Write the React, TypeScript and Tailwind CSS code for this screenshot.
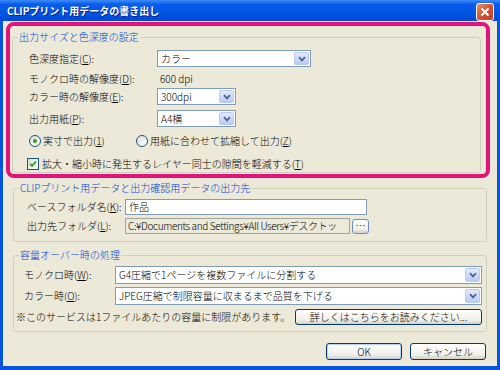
import React from "react";

const F = "font-['MS_UI_Gothic','Noto_Sans_CJK_JP',sans-serif]";

function Chevron() {
  return (
    <svg width="8" height="6" viewBox="0 0 8 6">
      <path d="M1 1.2 L4 4.4 L7 1.2" stroke="#4D6185" strokeWidth="1.7" fill="none" />
    </svg>
  );
}

function Select({ value, className }: { value: string; className: string }) {
  return (
    <div className={`flex items-stretch border border-[#7F9DB9] bg-white ${className}`}>
      <div className="flex flex-1 items-center pl-[3px] text-[10px] leading-none text-black">{value}</div>
      <div className="m-[1px] flex w-[15px] items-center justify-center rounded-[2px] border border-[#B9CBF3] bg-[linear-gradient(to_bottom,#E2EAFE,#B8CBF8)]">
        <Chevron />
      </div>
    </div>
  );
}

function Radio({ checked }: { checked?: boolean }) {
  return (
    <span className="flex h-[12px] w-[12px] items-center justify-center rounded-full border border-[#1C5180] bg-[linear-gradient(135deg,#DCDCD7,#FFFFFF)]">
      {checked && <span className="h-[4px] w-[4px] rounded-full bg-[#21A121]" />}
    </span>
  );
}

function Checkbox() {
  return (
    <span className="flex h-[12px] w-[12px] items-center justify-center border border-[#1C5180] bg-[linear-gradient(135deg,#DCDCD7,#FFFFFF)]">
      <svg width="8" height="8" viewBox="0 0 8 8">
        <path d="M1 3.8 L3 6 L7 1.5" stroke="#21A121" strokeWidth="1.8" fill="none" />
      </svg>
    </span>
  );
}

function XPButton({ children, className }: { children: React.ReactNode; className: string }) {
  return (
    <div
      className={`flex items-center justify-center rounded-[3px] border border-[#003C74] bg-[linear-gradient(to_bottom,#FFFFFF,#F0F0EA_70%,#D6D0C5)] text-[10px] leading-none text-black ${className}`}
    >
      {children}
    </div>
  );
}

function Legend({ children }: { children: React.ReactNode }) {
  return (
    <legend className="ml-[5px] px-[1px] text-[10px] leading-[12px] text-[#0046D5]">{children}</legend>
  );
}

export default function App() {
  return (
    <div className={`flex h-[370px] w-[500px] flex-col bg-[#0855DD] font-light ${F}`}>
      {/* title bar */}
      <div className="flex h-[21px] shrink-0 items-start justify-between bg-[linear-gradient(to_bottom,#3D8DF7,#0A5DEC_20%,#0055E5_60%,#0049D6)] pl-[7px] pr-[6px]">
        <div className="mt-[5px] text-[10px] font-bold leading-[12px] text-white [text-shadow:1px_1px_0_#0A1E8C]">
          CLIPプリント用データの書き出し
        </div>
        <div className="mt-[3px] flex h-[18px] w-[18px] items-center justify-center rounded-[3px] border border-white bg-[linear-gradient(135deg,#E88C6E,#D0502F_55%,#C0401F)]">
          <svg width="10" height="10" viewBox="0 0 10 10">
            <path d="M1.5 1.5 L8.5 8.5 M8.5 1.5 L1.5 8.5" stroke="white" strokeWidth="2" />
          </svg>
        </div>
      </div>

      {/* body */}
      <div className="mx-[3px] mb-[4px] flex flex-1 flex-col bg-[#ECE9D8] text-black">
        {/* pink highlight around group 1 */}
        <div className="ml-[3px] mt-[1px] h-[156px] w-[484px] rounded-[8px] border-[4px] border-[#E3137B] pt-[5px]">
          <fieldset className="ml-[2px] w-[469px] rounded-[3px] border border-[#D0D0BF] p-0">
            <Legend>出力サイズと色深度の設定</Legend>
            <div className="flex flex-col pb-[1px] pl-[16px] pt-[7px] text-[10px] leading-none">
              <div className="flex h-[17px] items-center">
                <span className="w-[128px]">
                  色深度指定(<u>C</u>):
                </span>
                <Select value="カラー" className="h-[17px] w-[154px]" />
              </div>
              <div className="mt-[4px] flex h-[16px] items-center">
                <span className="w-[128px]">
                  モノクロ時の解像度(<u>D</u>):
                </span>
                <span className="pl-[3px]">600 dpi</span>
              </div>
              <div className="mt-[1px] flex h-[17px] items-center">
                <span className="w-[128px]">
                  カラー時の解像度(<u>E</u>):
                </span>
                <Select value="300dpi" className="h-[17px] w-[79px]" />
              </div>
              <div className="mt-[5px] flex h-[17px] items-center">
                <span className="w-[128px]">
                  出力用紙(<u>P</u>):
                </span>
                <Select value="A4横" className="h-[17px] w-[79px]" />
              </div>
              <div className="mt-[7px] flex h-[14px] items-center">
                <div className="flex w-[107px] items-center gap-[2px]">
                  <Radio checked />
                  <span>
                    実寸で出力(<u>1</u>)
                  </span>
                </div>
                <div className="flex items-center gap-[2px]">
                  <Radio />
                  <span>
                    用紙に合わせて拡縮して出力(<u>Z</u>)
                  </span>
                </div>
              </div>
              <div className="-ml-[2px] mt-[9px] flex h-[14px] items-center gap-[3px]">
                <Checkbox />
                <span>
                  拡大・縮小時に発生するレイヤー同士の隙間を軽減する(<u>T</u>)
                </span>
              </div>
            </div>
          </fieldset>
        </div>

        {/* group 2 */}
        <fieldset className="ml-[10px] mt-[4px] w-[474px] rounded-[3px] border border-[#D0D0BF] p-0">
          <Legend>CLIPプリント用データと出力確認用データの出力先</Legend>
          <div className="flex flex-col gap-[3px] pb-[7px] pl-[13px] pt-[5px] text-[10px] leading-none">
            <div className="flex h-[16px] items-center">
              <span className="w-[98px]">
                ベースフォルダ名(<u>K</u>):
              </span>
              <div className="flex h-[16px] w-[242px] items-center border border-[#7F9DB9] bg-white pl-[3px]">作品</div>
            </div>
            <div className="flex h-[16px] items-center">
              <span className="w-[98px]">
                出力先フォルダ(<u>L</u>):
              </span>
              <div className="flex h-[16px] w-[225px] items-center overflow-hidden whitespace-nowrap border border-[#A6A591] bg-[#EBEADB] pl-[2px] tracking-[-0.35px]">
                C:¥Documents and Settings¥All Users¥デスクトッ
              </div>
              <XPButton className="ml-[2px] h-[15px] w-[17px] border-[#6C8FC7]">…</XPButton>
            </div>
          </div>
        </fieldset>

        {/* group 3 */}
        <fieldset className="ml-[10px] mt-[7px] w-[474px] rounded-[3px] border border-[#D0D0BF] p-0">
          <Legend>容量オーバー時の処理</Legend>
          <div className="flex flex-col pb-[6px] pt-[5px] text-[10px] leading-none">
            <div className="flex h-[18px] items-center pl-[10px]">
              <span className="w-[91px]">
                モノクロ時(<u>W</u>):
              </span>
              <Select value="G4圧縮で1ページを複数ファイルに分割する" className="h-[18px] w-[367px]" />
            </div>
            <div className="mt-[3px] flex h-[18px] items-center pl-[10px]">
              <span className="w-[91px]">
                カラー時(<u>O</u>):
              </span>
              <Select value="JPEG圧縮で制限容量に収まるまで品質を下げる" className="h-[18px] w-[367px]" />
            </div>
            <div className="mt-[4px] flex h-[16px] items-center pl-[2px]">
              <span className="w-[279px]">※このサービスは1ファイルあたりの容量に制限があります。</span>
              <XPButton className="h-[16px] w-[187px]">詳しくはこちらをお読みください...</XPButton>
            </div>
          </div>
        </fieldset>

        {/* bottom buttons */}
        <div className="mr-[11px] mt-[11px] flex justify-end gap-[8px]">
          <XPButton className="h-[17px] w-[76px] shadow-[inset_0_0_0_1px_#B9D1FA]">OK</XPButton>
          <XPButton className="h-[17px] w-[76px]">キャンセル</XPButton>
        </div>
      </div>
    </div>
  );
}
